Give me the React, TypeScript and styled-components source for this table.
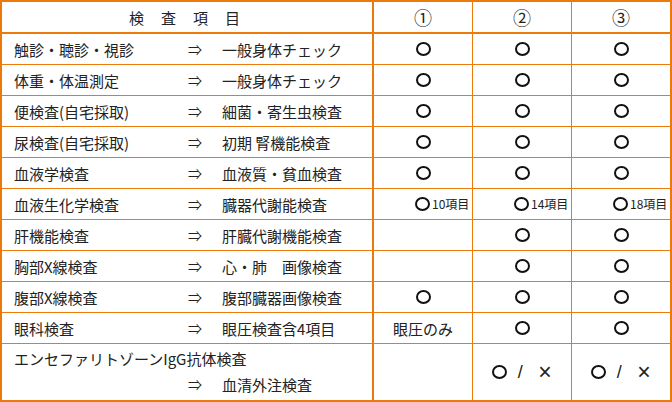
import React from "react";
import styled, { createGlobalStyle } from "styled-components";

const ORANGE = "#ec7a0b";
const INK = "#222";

const GlobalStyle = createGlobalStyle`
  body {
    margin: 0;
    background: #fff;
    font-family: "Noto Sans CJK JP", "Noto Sans", sans-serif;
    color: ${INK};
  }
`;

type Mark = "o" | "" | { note: string } | "ox" | string;

interface Row {
  item: string;
  result: string;
  marks: [Mark, Mark, Mark];
}

const rows: Row[] = [
  { item: "触診・聴診・視診", result: "一般身体チェック", marks: ["o", "o", "o"] },
  { item: "体重・体温測定", result: "一般身体チェック", marks: ["o", "o", "o"] },
  { item: "便検査(自宅採取)", result: "細菌・寄生虫検査", marks: ["o", "o", "o"] },
  { item: "尿検査(自宅採取)", result: "初期 腎機能検査", marks: ["o", "o", "o"] },
  { item: "血液学検査", result: "血液質・貧血検査", marks: ["o", "o", "o"] },
  {
    item: "血液生化学検査",
    result: "臓器代謝能検査",
    marks: [{ note: "10項目" }, { note: "14項目" }, { note: "18項目" }],
  },
  { item: "肝機能検査", result: "肝臓代謝機能検査", marks: ["", "o", "o"] },
  { item: "胸部X線検査", result: "心・肺　画像検査", marks: ["", "o", "o"] },
  { item: "腹部X線検査", result: "腹部臓器画像検査", marks: ["o", "o", "o"] },
  { item: "眼科検査", result: "眼圧検査含4項目", marks: ["眼圧のみ", "o", "o"] },
];

const Table = styled.div`
  display: grid;
  grid-template-columns: 372px 99px 99px 100px;
  grid-template-rows: 32px repeat(10, 31px) 58px;
  width: 672px;
  box-sizing: border-box;
  border-left: 2px solid ${ORANGE};
  border-top: 2px solid ${ORANGE};
`;

type Kind = "head" | "body" | "last";

const Cell = styled.div<{ $col: number; $kind: Kind }>`
  box-sizing: border-box;
  display: flex;
  align-items: center;
  justify-content: center;
  border-right: ${(p) => (p.$col === 0 || p.$col === 3 ? 2 : 1)}px solid ${ORANGE};
  border-bottom: ${(p) => (p.$kind === "body" ? 1 : 2)}px solid ${ORANGE};
  font-size: 15px;
  line-height: 1;
`;

const HeadTitle = styled.span`
  font-size: 15px;
  letter-spacing: 17px;
  padding-left: 12px;
`;

const HeadNum = styled.span`
  font-size: 18px;
`;

const ItemCell = styled(Cell)`
  display: grid;
  grid-template-columns: 174px 34px 1fr;
  align-items: center;
  justify-items: start;
  padding-left: 12px;
`;

const LastItemCell = styled(ItemCell)`
  grid-template-rows: 26px 26px;
  align-content: start;
  padding-top: 1px;
`;

const Wide = styled.span`
  grid-column: 1 / -1;
`;

const Arrow = styled.span`
  font-size: 14px;
`;

const Circle = styled.span`
  display: inline-block;
  box-sizing: border-box;
  width: 15px;
  height: 14px;
  border: 2px solid #111;
  border-radius: 50%;
  flex: none;
`;

const NoteCell = styled(Cell)`
  justify-content: flex-start;
  padding-left: 41px;
  gap: 2px;
`;

const Note = styled.span`
  font-size: 12px;
`;

const Choice = styled.span`
  display: flex;
  align-items: center;
`;

const Slash = styled.span`
  font-family: "Liberation Sans", sans-serif;
  font-size: 18px;
  color: ${INK};
  width: 26px;
  text-align: center;
`;

const Cross = styled.span`
  font-family: "Liberation Sans", sans-serif;
  font-size: 23px;
  line-height: 1;
  color: ${INK};
  margin-left: 5px;
`;

const MarkCell = ({ mark, col, kind }: { mark: Mark; col: number; kind: Kind }) => {
  if (typeof mark === "object") {
    return (
      <NoteCell $col={col} $kind={kind}>
        <Circle />
        <Note>{mark.note}</Note>
      </NoteCell>
    );
  }
  return (
    <Cell $col={col} $kind={kind}>
      {mark === "o" && <Circle />}
      {mark === "ox" && (
        <Choice>
          <Circle />
          <Slash>/</Slash>
          <Cross>×</Cross>
        </Choice>
      )}
      {mark !== "o" && mark !== "ox" && mark}
    </Cell>
  );
};

export default function App() {
  return (
    <>
      <GlobalStyle />
      <Table>
        <Cell $col={0} $kind="head">
          <HeadTitle>検査項目</HeadTitle>
        </Cell>
        <Cell $col={1} $kind="head">
          <HeadNum>①</HeadNum>
        </Cell>
        <Cell $col={2} $kind="head">
          <HeadNum>②</HeadNum>
        </Cell>
        <Cell $col={3} $kind="head">
          <HeadNum>③</HeadNum>
        </Cell>

        {rows.map((r) => (
          <React.Fragment key={r.item}>
            <ItemCell $col={0} $kind="body">
              <span>{r.item}</span>
              <Arrow>⇒</Arrow>
              <span>{r.result}</span>
            </ItemCell>
            {r.marks.map((m, i) => (
              <MarkCell key={i} mark={m} col={i + 1} kind="body" />
            ))}
          </React.Fragment>
        ))}

        <LastItemCell $col={0} $kind="last">
          <Wide>エンセファリトゾーンIgG抗体検査</Wide>
          <span />
          <Arrow>⇒</Arrow>
          <span>血清外注検査</span>
        </LastItemCell>
        <MarkCell mark="" col={1} kind="last" />
        <MarkCell mark="ox" col={2} kind="last" />
        <MarkCell mark="ox" col={3} kind="last" />
      </Table>
    </>
  );
}
